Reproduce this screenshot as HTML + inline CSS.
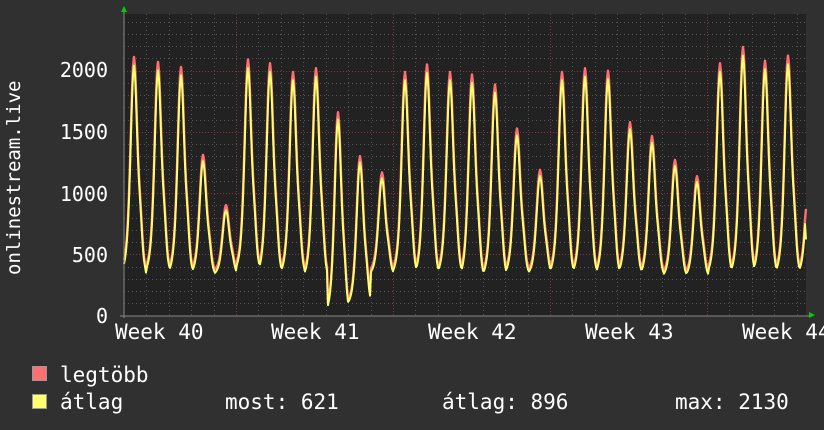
<!DOCTYPE html>
<html><head><meta charset="utf-8"><style>
html,body{margin:0;padding:0;background:#303030;width:824px;height:430px;overflow:hidden}
svg text{font-family:"DejaVu Sans Mono","Liberation Mono",monospace;fill:#fff}
</style></head><body>
<svg id="g" width="824" height="430" xmlns="http://www.w3.org/2000/svg">
<rect x="0" y="0" width="824" height="430" fill="#303030"/>
<rect x="124" y="14" width="682" height="302" fill="#222"/>
<g id="grid"></g>
<polyline id="red" fill="none" stroke="#ff7070" stroke-width="2.4" stroke-linejoin="round"/>
<polyline id="yel" fill="none" stroke="#ffff70" stroke-width="2" stroke-linejoin="round"/>
<polygon points="121,12 127,12 124,6" fill="#0c0"/>
<polygon points="809,312 809,318 815,315" fill="#0c0"/>
<line x1="124" y1="12" x2="124" y2="318" stroke="#888" stroke-width="1"/>
<line x1="120" y1="316" x2="810" y2="316" stroke="#888" stroke-width="1"/>
<text x="108" y="77" font-size="20" text-anchor="end">2000</text>
<text x="108" y="139" font-size="20" text-anchor="end">1500</text>
<text x="108" y="201" font-size="20" text-anchor="end">1000</text>
<text x="108" y="262" font-size="20" text-anchor="end">500</text>
<text x="108" y="323" font-size="20" text-anchor="end">0</text>
<text transform="translate(20,275) rotate(-90)" font-size="19">onlinestream.live</text>
<text x="115" y="339" font-size="21">Week 40</text>
<text x="271" y="339" font-size="21">Week 41</text>
<text x="428" y="339" font-size="21">Week 42</text>
<text x="585" y="339" font-size="21">Week 43</text>
<text x="742" y="339" font-size="21">Week 44</text>
<rect x="32.5" y="366.5" width="14" height="14" fill="#ff7070" stroke="#999"/>
<text x="60" y="382" font-size="21">legtöbb</text>
<rect x="32.5" y="394.5" width="14" height="14" fill="#ffff70" stroke="#999"/>
<text x="60" y="409" font-size="21">átlag</text>
<text x="225" y="409" font-size="21">most: 621</text>
<text x="442" y="409" font-size="21">átlag: 896</text>
<text x="675" y="409" font-size="21">max: 2130</text>
</svg>
<script>
var NS="http://www.w3.org/2000/svg",g=document.getElementById('grid');
function ln(x1,y1,x2,y2,c,d){var l=document.createElementNS(NS,'line');l.setAttribute('x1',x1);l.setAttribute('y1',y1);l.setAttribute('x2',x2);l.setAttribute('y2',y2);l.setAttribute('stroke',c);l.setAttribute('stroke-width',1);if(d)l.setAttribute('stroke-dasharray',d);g.appendChild(l);}
function Y(v){return 315.5-v*0.1225;}
for(var v=100;v<=2400;v+=100){var y=Math.round(Y(v))+0.5;ln(124,y,806,y,v%500==0?'#803838':'#555',v%500==0?'1,2':'1,3');}
for(var i=-5;i<40;i++){var x=236+i*22.43;if(x<125||x>806)continue;x=Math.round(x)+0.5;ln(x,14,x,316,(i%7==0)?'#803838':'#555',(i%7==0)?'1,2':'1,3');}
var pk=[[134,2040],[158,2000],[181,1960],[203,1260],[226,860],[248,2020],[270,1990],[293,1920],[316,1950],[338,1600],[360,1250],[382,1120],[405,1920],[427,1980],[450,1920],[472,1900],[495,1820],[517,1470],[540,1140],[562,1920],[585,1950],[608,1930],[630,1520],[652,1410],[675,1220],[697,1090],[720,1990],[743,2120],[765,2010],[788,2050],[811,2000]];
var lows=[330,340,330,330,330,360,330,330,300,0,80,330,330,320,330,300,310,330,330,330,330,320,330,320,310,310,330,330,330,330,330];
function val(x){var best=0;for(var i=0;i<pk.length;i++){var d=x-pk[i][0];if(d<-11.5||d>11.5)continue;var lo=lows[i];var f=Math.exp(-Math.pow(d/4.2,2))*0.7+Math.exp(-Math.pow(d/7.5,2))*0.3;var sh=0.12*Math.exp(-Math.pow((d-6.5)/2.5,2));var v=lo+(pk[i][1]-lo)*Math.min(1,f+sh);if(v>best)best=v;}return best||350;}
var py=[],pr=[];
for(var x=124;x<=806;x+=1){var v=val(x);py.push(x+','+Y(v).toFixed(1));pr.push(x+','+Y(v*1.025+20).toFixed(1));}
pr[pr.length-1]='806,'+Y(870).toFixed(1);py[py.length-1]='806,'+Y(621).toFixed(1);
document.getElementById('yel').setAttribute('points',py.join(' '));
document.getElementById('red').setAttribute('points',pr.join(' '));
</script>
</body></html>
